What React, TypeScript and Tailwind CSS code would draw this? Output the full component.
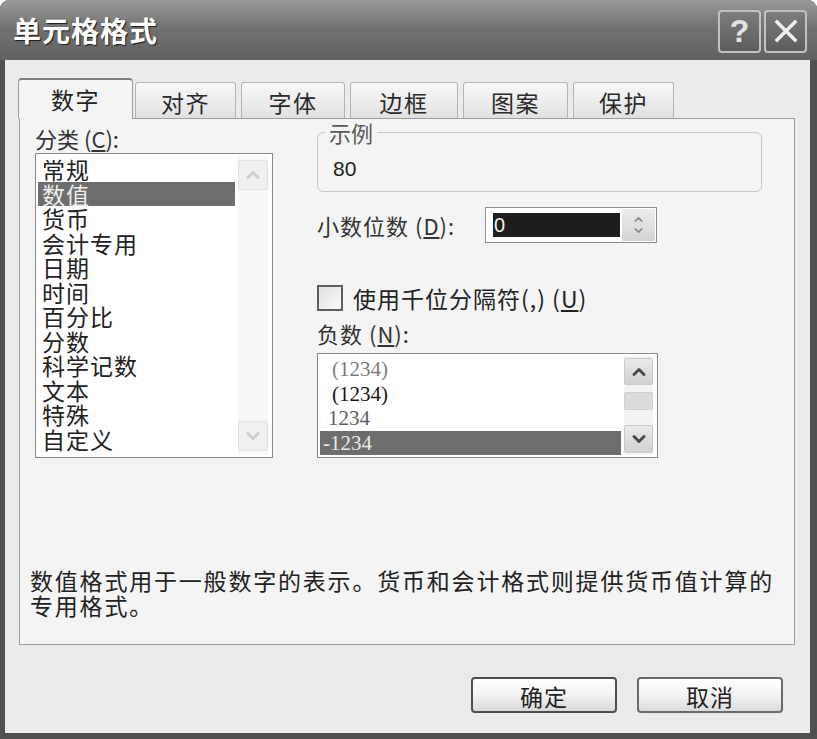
import { ChevronUp, ChevronDown } from 'lucide-react';

const categories = ['常规', '数值', '货币', '会计专用', '日期', '时间', '百分比', '分数', '科学记数', '文本', '特殊', '自定义'];

const tabs = [
    { label: '对齐', width: 'w-[101px] ml-[2px]' },
    { label: '字体', width: 'w-[104px] ml-[5px]' },
    { label: '边框', width: 'w-[108px] ml-[5px]' },
    { label: '图案', width: 'w-[105px] ml-[5px]' },
    { label: '保护', width: 'w-[101px] ml-[5px]' },
];

const negatives = [
    { text: '(1234)', className: 'pl-[12px] text-[#7c7c7c]' },
    { text: '(1234)', className: 'pl-[12px] text-[#151515]' },
    { text: '1234', className: 'pl-[8px] text-[#5e5e5e]' },
    { text: '-1234', className: 'pl-[3px] bg-[#6d6d6d] text-[#e8e8e8]' },
];

function ScrollButton({ up, disabled, className }: { up?: boolean; disabled?: boolean; className: string }) {
    const Icon = up ? ChevronUp : ChevronDown;
    return (
        <div
            className={
                disabled
                    ? `${className} flex items-center justify-center rounded-[2px] border border-[#e2e2e2] bg-[#f0f0f0]`
                    : `${className} flex items-center justify-center rounded-[2px] border border-[#c9c9c9] bg-gradient-to-b from-[#e9e9e9] to-[#d2d2d2]`
            }
        >
            <Icon size={20} strokeWidth={3.5} color={disabled ? '#cdcdcd' : '#4a4a4a'} />
        </div>
    );
}

function TitleButton({ children }: { children: React.ReactNode }) {
    return (
        <div className="w-[43px] h-[43px] rounded-[4px] border-2 border-[#c2c2c2] bg-gradient-to-b from-[#7d7d7d] to-[#5c5c5c] flex items-center justify-center text-[#e4e4e4]">
            {children}
        </div>
    );
}

export default function App() {
    return (
        <div className="w-[817px] h-[739px] bg-[#505050] rounded-t-[9px] overflow-hidden flex flex-col font-['Noto_Sans_CJK_SC','Noto_Sans',sans-serif] text-[#222]">
            {/* title bar */}
            <div className="h-[60px] shrink-0 flex items-center justify-between pl-[13px] pr-[10px] bg-gradient-to-b from-[#999999] via-[#707070] to-[#626262]">
                <span className="text-[28px] font-bold tracking-[1px] text-white [text-shadow:1px_1px_1px_#1a1a1a]">单元格格式</span>
                <div className="flex gap-[3px] mt-[2px]">
                    <TitleButton>
                        <span className="font-['Liberation_Sans',sans-serif] text-[32px] leading-none font-bold">?</span>
                    </TitleButton>
                    <TitleButton>
                        <svg width="26" height="26" viewBox="0 0 26 26">
                            <path d="M4 4 L22 22 M22 4 L4 22" stroke="#efefef" strokeWidth="3.5" strokeLinecap="square" />
                        </svg>
                    </TitleButton>
                </div>
            </div>

            {/* body */}
            <div className="flex-1 ml-[5px] mr-[7px] mb-[6px] bg-[#ebebeb] pt-[18px] pl-[13px] pr-[15px] flex flex-col">
                {/* tabs */}
                <div className="flex items-end h-[40px]">
                    <div className="relative z-10 -mb-px h-[41px] w-[115px] rounded-t-[4px] border border-b-0 border-[#9c9c9c] border-t-2 border-t-[#7e7e7e] bg-[#f4f4f4] flex items-center justify-center text-[23px] tracking-[1.5px]">
                        数字
                    </div>
                    {tabs.map((tab) => (
                        <div
                            key={tab.label}
                            className={`${tab.width} h-[36px] rounded-t-[3px] border border-b-0 border-[#b4b4b4] bg-gradient-to-b from-[#f8f8f8] to-[#e1e1e1] flex items-center justify-center pt-[3px] text-[23px] tracking-[1.5px] text-[#2a2a2a]`}
                        >
                            {tab.label}
                        </div>
                    ))}
                </div>

                {/* tab page */}
                <div className="ml-[1px] h-[527px] border border-[#9c9c9c] bg-[#f4f4f4] flex flex-col">
                    <div className="flex pl-[15px] gap-[44px]">
                        {/* category */}
                        <div className="w-[238px] pt-[7px]">
                            <div className="text-[22px] leading-[24px] text-[#333]">
                                分类 (<u>C</u>):
                            </div>
                            <div className="mt-[3px] h-[305px] border border-[#8a8a8a] bg-white flex gap-[3px] pl-[2px] pr-[4px] py-[2px]">
                                <ul className="flex-1 pt-[1px]">
                                    {categories.map((c) => (
                                        <li
                                            key={c}
                                            className={
                                                c === '数值'
                                                    ? 'pl-[4px] text-[23px] leading-[24.5px] tracking-[1px] whitespace-nowrap bg-[#6e6e6e] text-[#ededed]'
                                                    : 'pl-[4px] text-[23px] leading-[24.5px] tracking-[1px] whitespace-nowrap'
                                            }
                                        >
                                            {c}
                                        </li>
                                    ))}
                                </ul>
                                <div className="w-[30px] flex flex-col justify-between py-[4px] bg-[#f8f8f8]">
                                    <ScrollButton up disabled className="h-[30px]" />
                                    <ScrollButton disabled className="h-[30px]" />
                                </div>
                            </div>
                        </div>

                        {/* options */}
                        <div className="w-[445px] pt-[1px]">
                            <fieldset className="w-full h-[72px] rounded-[6px] border border-[#c6c6c6] px-[7px]">
                                <legend className="px-[4px] text-[22px] leading-[25px] text-[#5a5a5a]">示例</legend>
                                <div className="mt-[12px] ml-[8px] font-['Liberation_Sans',sans-serif] text-[21px] leading-[24px] text-[#222]">80</div>
                            </fieldset>

                            <div className="mt-[15px] flex items-center h-[36px]">
                                <div className="w-[168px] text-[22px] tracking-[1px] text-[#333]">
                                    小数位数 (<u>D</u>):
                                </div>
                                <div className="flex h-[36px] w-[172px] border border-[#8e8e8e] bg-white py-[1px] pl-[7px] pr-[1px] gap-[2px]">
                                    <div className="flex-1 my-[4px] bg-[#1d1d1d] flex items-center pl-[1px] font-['Liberation_Sans',sans-serif] text-[20px] text-[#f2f2f2]">
                                        0
                                    </div>
                                    <div className="w-[33px] flex flex-col items-center justify-center rounded-[2px] bg-gradient-to-b from-[#ececec] to-[#d4d4d4]">
                                        <ChevronUp size={13} strokeWidth={3} color="#8a8a8a" className="-mb-[1px]" />
                                        <ChevronDown size={13} strokeWidth={3} color="#8a8a8a" className="-mt-[1px]" />
                                    </div>
                                </div>
                            </div>

                            <div className="mt-[42px] h-[26px] flex items-center gap-[10px]">
                                <div className="w-[26px] h-[26px] border-2 border-[#5e5e5e] bg-gradient-to-br from-[#e0e0e0] to-[#fafafa]" />
                                <span className="text-[23px] tracking-[1px] text-[#222] whitespace-nowrap">
                                    使用千位分隔符(,) (<u>U</u>)
                                </span>
                            </div>

                            <div className="mt-[10px] text-[22px] leading-[24px] tracking-[1px] text-[#333]">
                                负数 (<u>N</u>):
                            </div>
                            <div className="mt-[8px] w-[341px] h-[105px] border border-[#8a8a8a] bg-white flex gap-[3px] pl-[2px] pr-[4px] py-[2px]">
                                <ul className="flex-1 pt-[1px] font-['Liberation_Serif',serif] text-[21px]">
                                    {negatives.map((n, i) => (
                                        <li key={i} className={`${n.className} leading-[24.5px]`}>
                                            {n.text}
                                        </li>
                                    ))}
                                </ul>
                                <div className="w-[29px] flex flex-col py-[2px] bg-[#f3f3f3]">
                                    <ScrollButton up className="h-[27px]" />
                                    <div className="mt-[7px] h-[18px] rounded-[2px] border border-[#d0d0d0] bg-[#dcdcdc]" />
                                    <ScrollButton className="mt-auto h-[28px]" />
                                </div>
                            </div>
                        </div>
                    </div>

                    <p className="mt-auto mb-[27px] pl-[10px] max-w-[770px] text-[23px] leading-[24.5px] tracking-[1.8px] text-[#222]">
                        数值格式用于一般数字的表示。货币和会计格式则提供货币值计算的专用格式。
                    </p>
                </div>

                {/* buttons */}
                <div className="mt-[32px] flex justify-end gap-[20px] pr-[12px]">
                    <button className="h-[36px] w-[146px] rounded-[4px] border-2 border-[#4e4e4e] bg-gradient-to-b from-white via-[#f3f3f3] to-[#d8d8d8] text-[23px] tracking-[1px] text-[#222]">
                        确定
                    </button>
                    <button className="h-[36px] w-[146px] rounded-[4px] border-2 border-[#6a6a6a] bg-gradient-to-b from-white via-[#f3f3f3] to-[#dcdcdc] text-[23px] tracking-[1px] text-[#222]">
                        取消
                    </button>
                </div>
            </div>
        </div>
    );
}
